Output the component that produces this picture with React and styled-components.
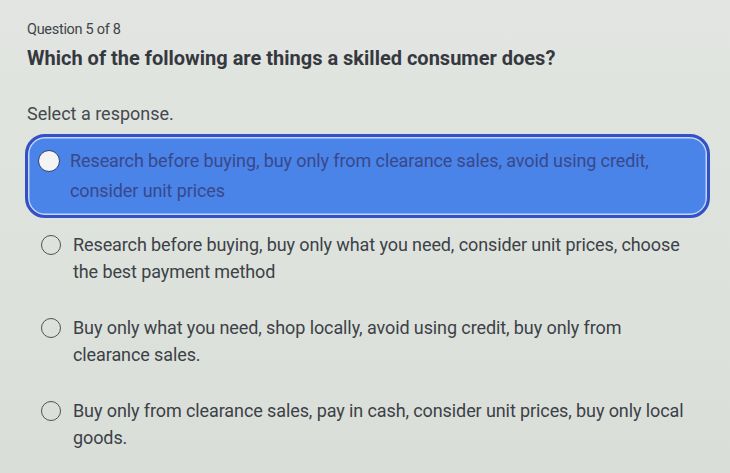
import React from "react";
import styled, { createGlobalStyle } from "styled-components";

const Global = createGlobalStyle`
  html, body { margin: 0; padding: 0; }
  body {
    background: #dde2dc;
    font-family: Roboto, "Liberation Sans", sans-serif;
    color: #3c4147;
  }
`;

const Page = styled.div`
  width: 730px;
  height: 473px;
  box-sizing: border-box;
  padding: 21px 18px 0 27px;
  background: linear-gradient(180deg, #e2e5e1 0%, #dde2dc 55%, #d9ded9 100%);
  overflow: hidden;
`;

const Counter = styled.div`
  font-size: 14.5px;
  line-height: 18px;
  color: #3f4449;
  letter-spacing: -0.3px;
`;

const Prompt = styled.h1`
  margin: 6px 0 0;
  font-size: 20px;
  line-height: 26px;
  font-weight: 700;
  color: #35393f;
`;

const Hint = styled.div`
  margin-top: 31px;
  font-size: 18px;
  line-height: 24px;
  color: #45494e;
`;

const List = styled.div`
  display: flex;
  flex-direction: column;
  gap: 23px;
  margin: 8px 0 0 -2px;
  width: 685px;
`;

const Option = styled.label`
  display: flex;
  align-items: flex-start;
  gap: ${(p) => (p.$selected ? "10px" : "12px")};
  box-sizing: border-box;
  padding: ${(p) => (p.$selected ? "9px 12px 9px 10px" : "0 12px 0 13px")};
  margin-bottom: ${(p) => (p.$selected ? "-13px" : "0")};
  border-radius: 20px;
  border: 3px solid ${(p) => (p.$selected ? "#3550c6" : "transparent")};
  background: ${(p) => (p.$selected ? "#4b84e8" : "transparent")};
  box-shadow: ${(p) => (p.$selected ? "inset 0 0 0 1.5px #c3d5f6" : "none")};
  color: ${(p) => (p.$selected ? "#38488a" : "#3c4147")};
  cursor: pointer;
`;

const Radio = styled.span`
  flex: none;
  box-sizing: border-box;
  width: ${(p) => (p.$selected ? "22px" : "20px")};
  height: ${(p) => (p.$selected ? "22px" : "20px")};
  margin-top: 4px;
  border-radius: 50%;
  border: 1.5px solid ${(p) => (p.$selected ? "#2f3f7a" : "#4d5257")};
  background: ${(p) => (p.$selected ? "#f4f5f3" : "transparent")};
`;

const Text = styled.span`
  font-size: 18px;
  line-height: ${(p) => (p.$selected ? "30px" : "27px")};
  letter-spacing: -0.1px;
`;

const Line = styled.span`
  display: block;
  white-space: nowrap;
`;

const options = [
  ["Research before buying, buy only from clearance sales, avoid using credit,", "consider unit prices"],
  ["Research before buying, buy only what you need, consider unit prices, choose", "the best payment method"],
  ["Buy only what you need, shop locally, avoid using credit, buy only from", "clearance sales."],
  ["Buy only from clearance sales, pay in cash, consider unit prices, buy only local", "goods."],
];

export default function App() {
  return (
    <>
      <Global />
      <Page>
        <Counter>Question 5 of 8</Counter>
        <Prompt>Which of the following are things a skilled consumer does?</Prompt>
        <Hint>Select a response.</Hint>
        <List>
          {options.map((lines, i) => (
            <Option key={i} $selected={i === 0}>
              <Radio $selected={i === 0} />
              <Text $selected={i === 0}>
                {lines.map((l, j) => (
                  <Line key={j}>{l}</Line>
                ))}
              </Text>
            </Option>
          ))}
        </List>
      </Page>
    </>
  );
}
